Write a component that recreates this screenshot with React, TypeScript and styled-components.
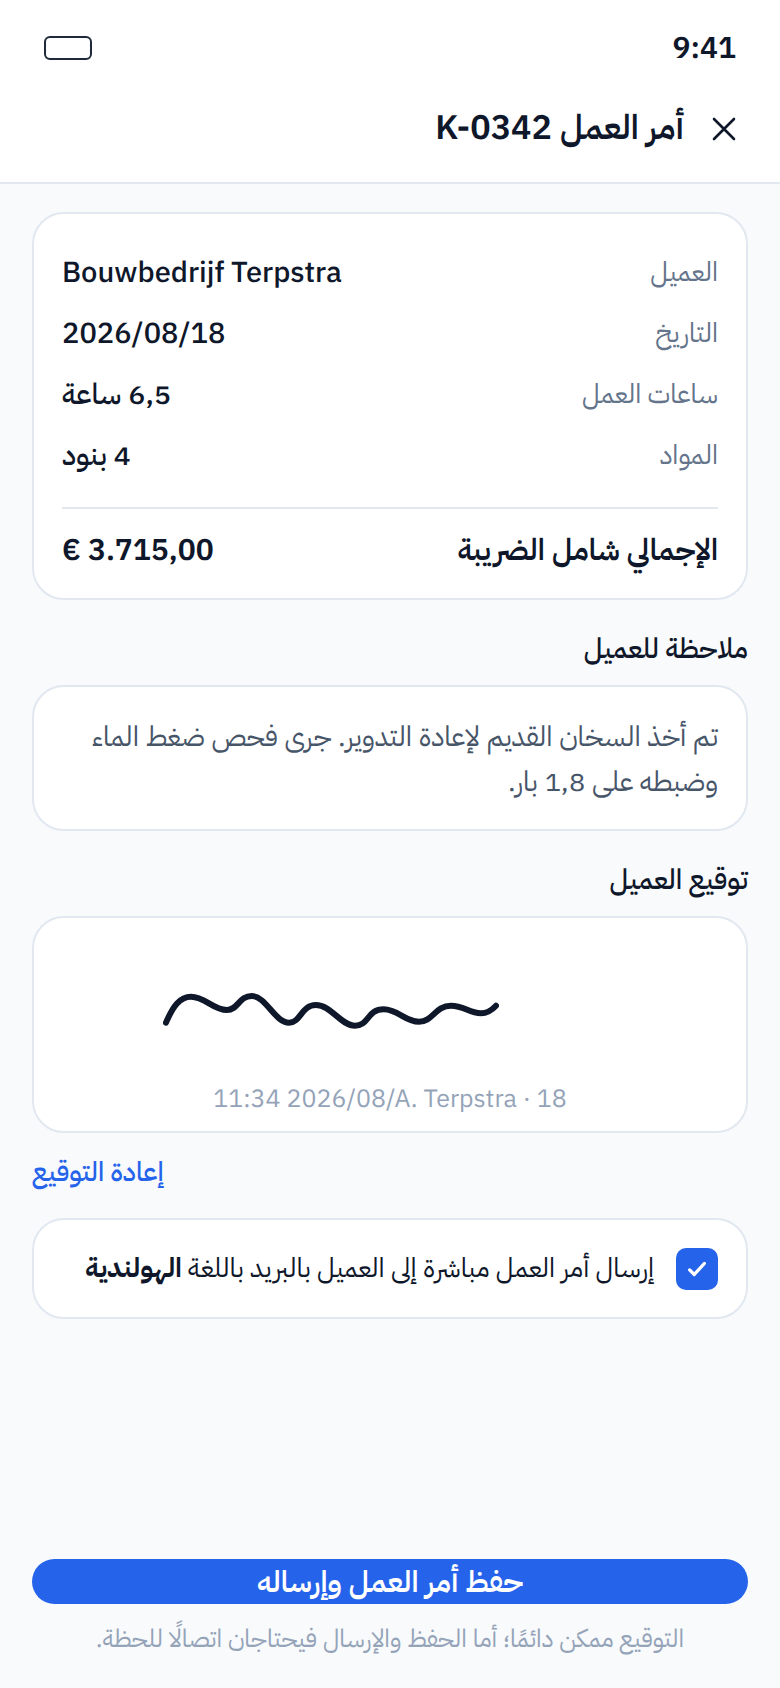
import React from 'react';
import styled, { createGlobalStyle } from 'styled-components';

const Global = createGlobalStyle`
  html, body { margin: 0; padding: 0; background: #f8fafc; }
  * { box-sizing: border-box; }
  #root { width: 780px; height: 1688px; }
`;
const Screen = styled.div`
  width: 780px; height: 1688px; display: flex; flex-direction: column;
  background: #f8fafc; color: #0f172a; text-rendering: geometricPrecision;
  font-family: "IBM Plex Sans Arabic", "IBM Plex Sans", "Noto Sans", sans-serif; overflow: hidden;
`;
const Top = styled.header`
  background: #fff; border-bottom: 2px solid #e2e8f0; height: 184px;
  display: flex; flex-direction: column;
`;
const StatusBar = styled.div`
  height: 76px; padding: 20px 44px 0; display: flex; align-items: center; justify-content: space-between;
`;
const Clock = styled.span` font-size: 30px; font-weight: 600; `;
const Battery = styled.span` width: 48px; height: 24px; border: 2px solid #1e293b; border-radius: 6px; `;
const TitleBar = styled.div`
  flex: 1; padding: 0 44px 0 0; display: flex; align-items: center; gap: 28px;
`;
const Title = styled.h1` margin: 0 0 2px; font-size: 34px; font-weight: 600; `;
const Main = styled.main`
  flex: 1; display: flex; flex-direction: column; padding: 28px 32px 0;
`;
const Card = styled.section`
  background: #fff; border: 2px solid #e2e8f0; border-radius: 32px;
`;
const Summary = styled(Card)` padding: 29px 28px 0; height: 388px; `;
const Row = styled.div`
  display: flex; justify-content: space-between; align-items: center; height: 61px; font-size: 29px; font-weight: 500;
`;
const Label = styled.span` color: #64748b; font-weight: 400; font-size: 27px; padding-bottom: 2px; `;
const Rule = styled.hr` border: 0; border-top: 2px solid #e2e8f0; margin: 20px 0 0; `;
const TotalRow = styled.div`
  display: flex; justify-content: space-between; align-items: center; height: 82px; font-size: 30px; font-weight: 600;
`;
const SectionLabel = styled.h2` margin: 29px 0 16px; font-size: 28px; font-weight: 500; line-height: 40px; `;
const Note = styled(Card)`
  padding: 28px 28px 0; height: 146px; font-size: 28px; line-height: 45px; color: #475569;
`;
const SignatureBox = styled(Card)`
  height: 217px; display: flex; flex-direction: column; align-items: center;
`;
const Signature = styled.svg` margin: 72px 118px 0 0; flex: none; `;
const Stamp = styled.div` direction: ltr; margin-top: 52px; font-size: 25px; line-height: 36px; color: #94a3b8; `;
const Redo = styled.a` margin: 20px 0 25px; align-self: flex-end; color: #2563eb; font-size: 27px; font-weight: 500; line-height: 40px; `;
const Consent = styled(Card)`
  height: 101px; padding: 0 28px; display: flex; align-items: center; gap: 22px; font-size: 27px;
`;
const Check = styled.span`
  width: 42px; height: 42px; border-radius: 10px; background: #2563eb; display: flex; align-items: center; justify-content: center; flex: none;
`;
const Foot = styled.footer`
  margin-top: auto; padding: 0 32px 28px; display: flex; flex-direction: column; align-items: stretch;
`;
const Primary = styled.button`
  height: 45px; border: 0; border-radius: 23px; background: #2563eb; color: #fff; font: inherit; font-size: 30px; font-weight: 600; padding: 0; line-height: 45px;
`;
const Hint = styled.p` margin: 16px 0 0; text-align: center; color: #94a3b8; font-size: 25px; line-height: 40px; `;

const rows: [string, React.ReactNode][] = [
  ['العميل', 'Bouwbedrijf Terpstra'],
  ['التاريخ', <bdi dir="ltr">2026/08/18</bdi>],
  ['ساعات العمل', '6,5 ساعة'],
  ['المواد', '4 بنود'],
];

export default function App() {
  return (
    <Screen dir="rtl">
      <Global />
      <Top>
        <StatusBar><Clock>9:41</Clock><Battery /></StatusBar>
        <TitleBar>
          <svg width="24" height="24" viewBox="0 0 24 24" fill="none" stroke="#0f172a" strokeWidth="2.6" strokeLinecap="round"><path d="M2 2 22 22M22 2 2 22"/></svg>
          <Title>أمر العمل K-0342</Title>
        </TitleBar>
      </Top>
      <Main>
        <Summary>
          {rows.map(([l, v]) => <Row key={l}><Label>{l}</Label><span>{v}</span></Row>)}
          <Rule />
          <TotalRow><span>الإجمالي شامل الضريبة</span><bdi dir="ltr">€ 3.715,00</bdi></TotalRow>
        </Summary>
        <SectionLabel>ملاحظة للعميل</SectionLabel>
        <Note>تم أخذ السخان القديم لإعادة التدوير. جرى فحص ضغط الماء وضبطه على 1,8 بار.</Note>
        <SectionLabel>توقيع العميل</SectionLabel>
        <SignatureBox>
          <Signature width="336" height="40" viewBox="0 0 336 40" fill="none" stroke="#0f172a" strokeWidth="6" strokeLinecap="round" strokeLinejoin="round">
            <path d="M3 32.7C10 16 17 6.7 28 6.7C42 6.7 50 20 64 20C75 20 76 6 88.7 6C103 6 112 32.7 126 32.7C138 32.7 138 15 153 15C168 15 178 35.7 192 35.7C206 35.7 204 19.3 220.7 19.3C235 19.3 242 31.7 256 31.7C270 31.7 272 15.7 288 15.7C301 15.7 306 23.3 318 23.3C325 23.3 329 20 333 15.7"/>
          </Signature>
          <Stamp>11:34 2026/08/A. Terpstra · 18</Stamp>
        </SignatureBox>
        <Redo>إعادة التوقيع</Redo>
        <Consent>
          <Check><svg width="22" height="22" viewBox="0 0 24 24" fill="none" stroke="#fff" strokeWidth="3.6" strokeLinecap="round" strokeLinejoin="round"><path d="M4 13l5 5L20 6"/></svg></Check>
          <span>إرسال أمر العمل مباشرة إلى العميل بالبريد باللغة <b>الهولندية</b></span>
        </Consent>
      </Main>
      <Foot>
        <Primary>حفظ أمر العمل وإرساله</Primary>
        <Hint>التوقيع ممكن دائمًا؛ أما الحفظ والإرسال فيحتاجان اتصالًا للحظة.</Hint>
      </Foot>
    </Screen>
  );
}
